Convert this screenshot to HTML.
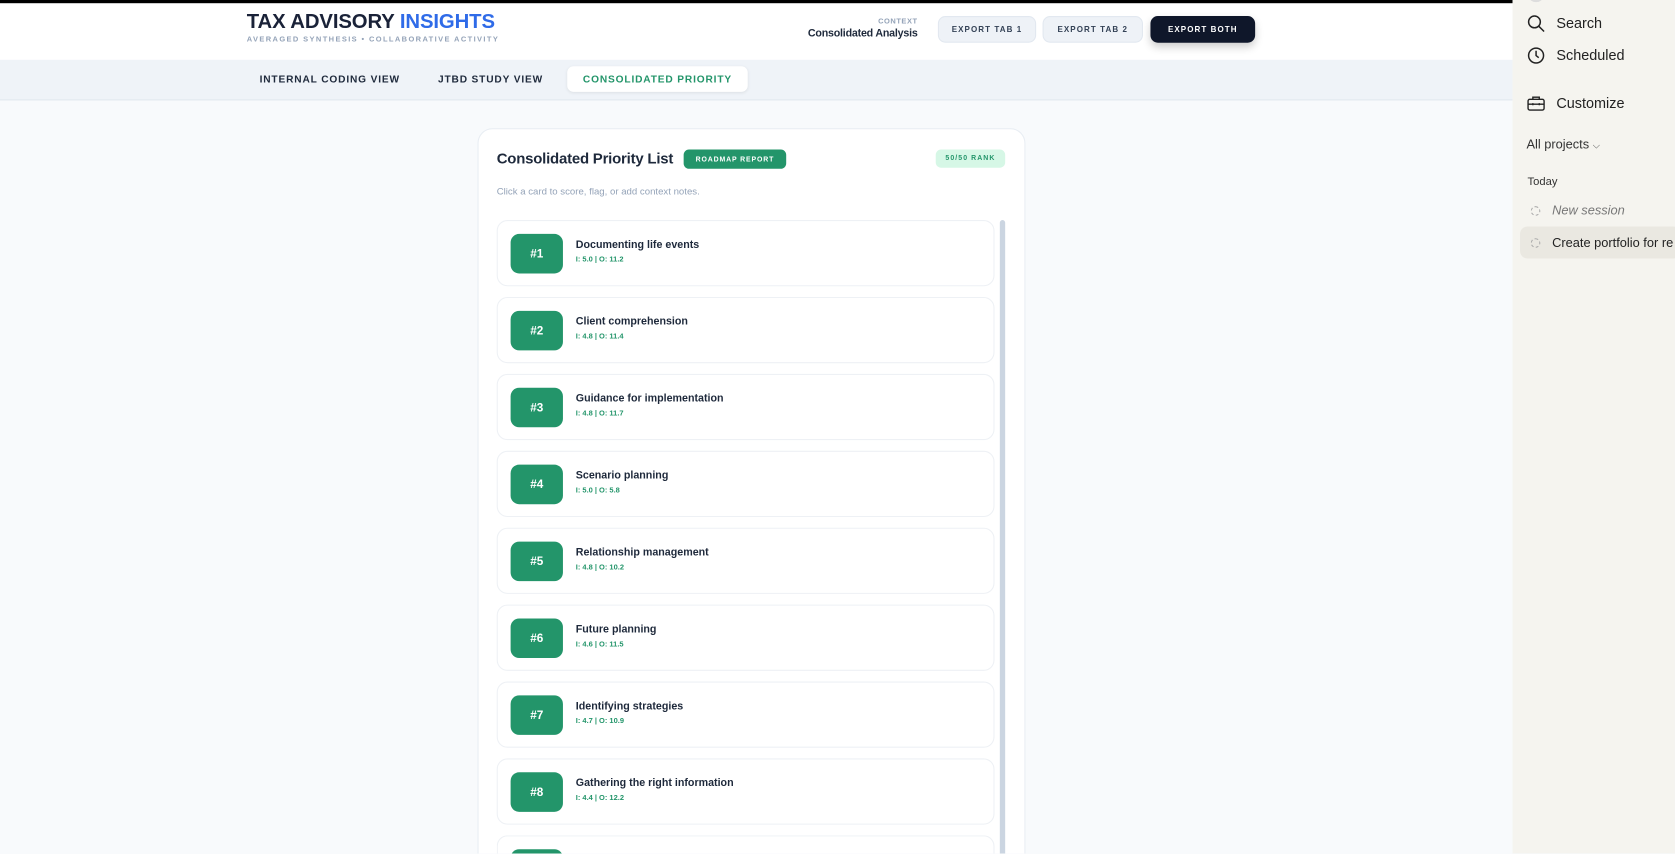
<!DOCTYPE html>
<html><head><meta charset="utf-8"><style>
*{box-sizing:border-box;margin:0;padding:0}
html,body{width:1675px;height:853px;overflow:hidden;background:#f8fafc;font-family:"Liberation Sans",Arial,sans-serif}
#w{position:absolute;left:0;top:0;width:1568px;height:799px;transform:scale(1.0682);transform-origin:0 0;background:#f8fafc;overflow:hidden}
.a{position:absolute}
.hdr{left:0;top:0;width:1416px;height:56px;background:#fff;border-top:3px solid #000}
.nav{left:0;top:56px;width:1416px;height:38px;background:#eff3f8;border-bottom:1px solid #e2e8f0}
.tab{font-size:9.5px;font-weight:bold;letter-spacing:.8px;color:#1e293b}
.btn{height:25px;border-radius:7px;background:#eef2f7;border:1px solid #e2e8f0;font-size:7.5px;font-weight:bold;letter-spacing:1px;color:#334155;display:flex;align-items:center;justify-content:center}
.card{left:447px;top:120px;width:513px;height:679px;background:#fff;border:1px solid #e8edf3;border-bottom:none;border-radius:14px 14px 0 0}
.it{left:465px;width:466px;height:62px;background:#fff;border:1px solid #eef1f5;border-radius:10px}
.rk{position:absolute;left:12px;top:12px;width:49px;height:37px;background:#23956a;border-radius:8px;color:#fff;font-weight:bold;font-size:11px;display:flex;align-items:center;justify-content:center}
.t{position:absolute;left:73px;top:17px;font-size:10px;font-weight:bold;color:#1e293b}
.s{position:absolute;left:73px;top:33px;font-size:7px;font-weight:bold;color:#23956a}
.sb{left:1416px;top:0;width:152px;height:799px;background:#f5f4ef;color:#222}
.sb .x{position:absolute;font-size:13.5px}
</style></head><body><div id="w">
<div class="a hdr">
 <div class="a" style="left:231px;top:7px;font-size:19px;font-weight:900;color:#1a2238;letter-spacing:-.1px">TAX ADVISORY <span style="color:#2f6be8">INSIGHTS</span></div>
 <div class="a" style="left:231px;top:31px;font-size:7px;letter-spacing:1.3px;color:#94a3b8;font-weight:bold">AVERAGED SYNTHESIS • COLLABORATIVE ACTIVITY</div>
 <div class="a" style="left:720px;top:14px;width:139px;text-align:right;font-size:7px;color:#94a3b8;font-weight:bold;letter-spacing:.5px">CONTEXT</div>
 <div class="a" style="left:720px;top:23px;width:139px;text-align:right;font-size:10px;color:#1e293b;font-weight:bold;letter-spacing:-.2px">Consolidated Analysis</div>
 <div class="a btn" style="left:878px;top:12px;width:92px">EXPORT TAB 1</div>
 <div class="a btn" style="left:976px;top:12px;width:94px">EXPORT TAB 2</div>
 <div class="a btn" style="left:1077px;top:12px;width:98px;background:#0f172a;color:#fff;border-color:#0f172a;box-shadow:0 4px 8px rgba(0,0,0,.2)">EXPORT BOTH</div>
</div>
<div class="a nav">
 <div class="a tab" style="left:243px;top:13px">INTERNAL CODING VIEW</div>
 <div class="a tab" style="left:410px;top:13px">JTBD STUDY VIEW</div>
 <div class="a tab" style="left:531px;top:6px;width:169px;height:24px;background:#fff;border-radius:6px;color:#23956a;display:flex;align-items:center;justify-content:center;box-shadow:0 1px 3px rgba(0,0,0,.08)">CONSOLIDATED PRIORITY</div>
</div>
<div class="a card"></div>
<div class="a" style="left:465px;top:140px;font-size:14px;font-weight:bold;color:#1e293b;letter-spacing:-.2px">Consolidated Priority List</div>
<div class="a" style="left:640px;top:140px;width:96px;height:18px;background:#23956a;border-radius:5px;color:#fff;font-size:6.5px;font-weight:bold;letter-spacing:.8px;display:flex;align-items:center;justify-content:center">ROADMAP REPORT</div>
<div class="a" style="left:876px;top:140px;width:65px;height:17px;background:#d6f7e6;border-radius:5px;color:#23956a;font-size:6.5px;font-weight:bold;letter-spacing:1px;display:flex;align-items:center;justify-content:center">50/50 RANK</div>
<div class="a" style="left:465px;top:174px;font-size:9px;color:#94a3b8">Click a card to score, flag, or add context notes.</div>
<div class="a" style="left:936px;top:206px;width:5px;height:600px;background:#cbd5e1;border-radius:3px"></div>
<div class="a it" style="top:206px"><div class="rk">#1</div><div class="t">Documenting life events</div><div class="s">I: 5.0 | O: 11.2</div></div>
<div class="a it" style="top:278px"><div class="rk">#2</div><div class="t">Client comprehension</div><div class="s">I: 4.8 | O: 11.4</div></div>
<div class="a it" style="top:350px"><div class="rk">#3</div><div class="t">Guidance for implementation</div><div class="s">I: 4.8 | O: 11.7</div></div>
<div class="a it" style="top:422px"><div class="rk">#4</div><div class="t">Scenario planning</div><div class="s">I: 5.0 | O: 5.8</div></div>
<div class="a it" style="top:494px"><div class="rk">#5</div><div class="t">Relationship management</div><div class="s">I: 4.8 | O: 10.2</div></div>
<div class="a it" style="top:566px"><div class="rk">#6</div><div class="t">Future planning</div><div class="s">I: 4.6 | O: 11.5</div></div>
<div class="a it" style="top:638px"><div class="rk">#7</div><div class="t">Identifying strategies</div><div class="s">I: 4.7 | O: 10.9</div></div>
<div class="a it" style="top:710px"><div class="rk">#8</div><div class="t">Gathering the right information</div><div class="s">I: 4.4 | O: 12.2</div></div>
<div class="a it" style="top:782px;height:17px;border-bottom:none;border-radius:10px 10px 0 0;overflow:hidden"><div class="rk">#9</div></div>
<div class="a sb">
 <svg class="a" style="left:13px;top:13px" width="18" height="18" viewBox="0 0 18 18" fill="none" stroke="#222" stroke-width="1.4"><circle cx="7.5" cy="7.5" r="5.5"/><path d="M11.5 11.5l5 5"/></svg>
 <div class="x" style="left:41px;top:14px">Search</div>
 <svg class="a" style="left:13px;top:43px" width="18" height="18" viewBox="0 0 18 18" fill="none" stroke="#222" stroke-width="1.4"><circle cx="9" cy="9" r="7"/><path d="M9 4.5v4.5l2.5 2"/></svg>
 <div class="x" style="left:41px;top:44px">Scheduled</div>
 <svg class="a" style="left:13px;top:89px" width="18" height="16" viewBox="0 0 18 16" fill="none" stroke="#222" stroke-width="1.3"><rect x="1.5" y="4" width="15" height="10" rx="1.5"/><path d="M6 4V2h6v2M1.5 8.5h15M6 7.5v2M12 7.5v2"/></svg>
 <div class="x" style="left:41px;top:89px">Customize</div>
 <div class="x" style="left:13px;top:128px;font-size:12px;color:#333">All projects <span style="font-size:9px;color:#666">⌵</span></div>
 <div class="x" style="left:14px;top:164px;font-size:10.5px;color:#333">Today</div>
 <div class="a" style="left:17px;top:193px;width:9px;height:9px;border:1px dashed #aaa;border-radius:50%"></div>
 <div class="x" style="left:37px;top:190px;font-size:12px;font-style:italic;color:#777">New session</div>
 <div class="a" style="left:7px;top:212px;width:150px;height:30px;background:#eae8e1;border-radius:7px"></div>
 <div class="a" style="left:17px;top:223px;width:9px;height:9px;border:1px dashed #aaa;border-radius:50%"></div>
 <div class="x" style="left:37px;top:220px;font-size:12px;white-space:nowrap;color:#222">Create portfolio for re</div>
 <div class="a" style="left:16px;top:-6px;width:12px;height:8px;border-radius:50%;background:#ddd"></div>
</div>
</div></body></html>
